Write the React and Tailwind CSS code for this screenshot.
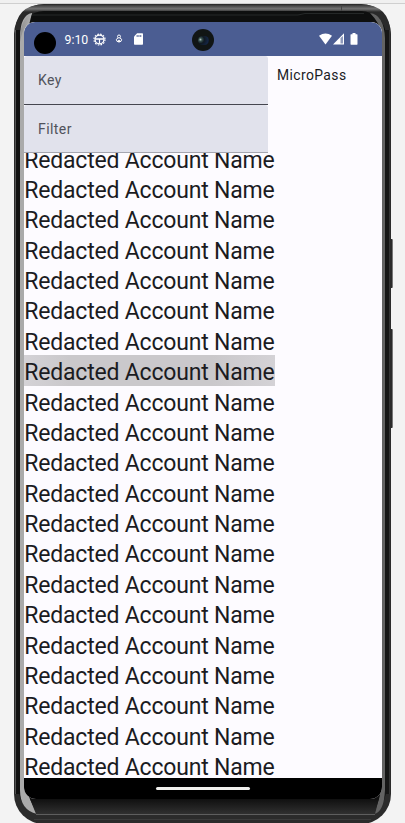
import React from "react";

const accounts = Array.from({ length: 21 }, () => "Redacted Account Name");
const selectedIndex = 7;

function Chassis() {
  return (
    <svg className="absolute inset-0" width="405" height="823" viewBox="0 0 405 823" aria-hidden="true">
      <defs>
        <linearGradient id="top" x1="0" y1="4" x2="0" y2="12" gradientUnits="userSpaceOnUse">
          <stop offset="0" stopColor="#252525" />
          <stop offset="0.25" stopColor="#4a4a4a" />
          <stop offset="0.6" stopColor="#747474" />
          <stop offset="1" stopColor="#2a2a2a" />
        </linearGradient>
        <linearGradient id="chin" x1="0" y1="799" x2="0" y2="814" gradientUnits="userSpaceOnUse">
          <stop offset="0" stopColor="#101010" />
          <stop offset="1" stopColor="#303030" />
        </linearGradient>
        <linearGradient id="glint" x1="0" y1="0" x2="1" y2="0">
          <stop offset="0" stopColor="#8e8e8e" />
          <stop offset="1" stopColor="#b4b4b4" />
        </linearGradient>
      </defs>
      <rect x="390" y="239" width="3" height="49" rx="1" fill="#777" />
      <rect x="390" y="239" width="2" height="49" fill="#2b2b2b" />
      <rect x="390" y="329" width="3" height="99" rx="1" fill="#777" />
      <rect x="390" y="329" width="2" height="99" fill="#2b2b2b" />
      <rect x="14" y="4" width="377" height="820" rx="30" fill="#2b2b2b" />
      <path d="M15 34Q15 4.500 44 4.500H361Q390 4.500 390.500 34L384 30Q380 12 360 11.500H46Q24 12 20 34Z" fill="url(#top)" />
      <rect x="19" y="11" width="367" height="804" rx="25" fill="#0e0f0f" />
      <rect x="15" y="30" width="1" height="764" fill="#555" />
      <rect x="16" y="30" width="4" height="764" fill="#111" />
      <rect x="385" y="30" width="4" height="764" fill="#161616" />
      <rect x="389" y="30" width="1" height="764" fill="#343434" />
      <path d="M20 38Q20 15 32 13L29 25L24 34V769L30 799L37 814Q20 810 20 790Z" fill="#aaa" />
      <path d="M27 25Q22 30 20 42V37Q21 19 32 13Z" fill="url(#glint)" />
      <path d="M382 34Q379 22 370 13Q384 15 385 38V790Q384 812 374 814L379 799L382 783Z" fill="#636363" />
      <path d="M28 794H380L375 814H36Z" fill="url(#chin)" />
      <path d="M36 814.500H375" stroke="#5e5e5e" />
      <path d="M34 819.500H371" stroke="#3b3b3b" />
      <path d="M32 15H298L305 13.500H364" fill="none" stroke="#252828" />
      <path d="M341.500 5V11" stroke="#444" />
    </svg>
  );
}

function StatusBar() {
  return (
    <header className="relative flex h-[34px] shrink-0 items-center rounded-t-[11px] bg-[#4b5d92] text-white">
      <span className="ml-[10px] mt-[8px] h-[22px] w-[22px] rounded-full bg-black" />
      <span className="ml-[8.500px] mt-[2px] w-[24px] text-[12.300px] leading-none">9:10</span>
      <svg className="ml-[4.500px]" width="13" height="13" viewBox="0 0 13 13" fill="none" stroke="white">
        <circle cx="6.500" cy="6.500" r="5.500" strokeWidth="1.200" strokeDasharray="1.600 1.280" />
        <circle cx="6.500" cy="6.500" r="4.400" strokeWidth="1.300" />
        <path d="M2.500 6H10.500" strokeWidth="1.700" />
        <path d="M6.500 6V10.500" strokeWidth="1.200" />
      </svg>
      <svg className="ml-[8.500px]" width="8" height="11" viewBox="0 0 8 11" fill="none" stroke="white">
        <circle cx="4" cy="2.500" r="1.500" />
        <path d="M3 4L1.300 5.300A2.700 2.700 0 1 0 6.700 5.300L5 4" />
        <circle cx="4" cy="7" r="0.800" fill="white" />
      </svg>
      <svg className="ml-[11px]" width="9" height="12" viewBox="0 0 10 12" preserveAspectRatio="none">
        <path d="M3.500 .3H9.200Q10 .3 10 1.100V10.900Q10 11.700 9.200 11.700H.8Q0 11.700 0 10.900V3.500Z" fill="white" />
        <path d="M3.500 2V4M5.500 2V4M7.500 2V4" stroke="#4b5d92" />
      </svg>
      <span className="absolute left-[168px] top-[7px] flex h-[22px] w-[22px] items-center justify-center rounded-full bg-[#111515]">
        <span className="h-[9px] w-[11px] rounded-full bg-[radial-gradient(circle_at_22%_40%,#b9c8c7_0,#38514f_16%,#101922_38%,#142544_75%,#0b1018_100%)]" />
      </span>
      <svg className="ml-auto mr-[24px]" width="39" height="12" viewBox="0 0 39 12">
        <path d="M0 2.700Q6.500 -1.700 13 2.700L6.500 11.500Z" fill="white" />
        <path d="M14 11.500L25 .3V11.500Z" fill="white" />
        <path d="M21.500 5V10.500H24V3Z" fill="#8f9abc" />
        <path d="M33.500 0H36.500V1.300H38Q38.500 1.300 38.500 2V11Q38.500 11.700 38 11.700H32Q31.500 11.700 31.500 11V2Q31.500 1.300 32 1.300H33.500Z" fill="white" />
      </svg>
    </header>
  );
}

function Field({ label, line }) {
  return (
    <div className={`flex h-[48.500px] items-center rounded-t-[3px] border-b bg-[#e1e2ec] pl-[14px] pt-[1.500px] text-[14px] tracking-[0.430px] text-[#50525b] ${line}`}>
      {label}
    </div>
  );
}

export default function App() {
  return (
    <main className="relative h-[823px] w-[405px] overflow-hidden border-t-[3px] border-[#f0f0f0] bg-[#f3f3f3] font-['Roboto',sans-serif]">
      <div className="h-px bg-[#cfcfcf]" />
      <div className="absolute -top-[3px] left-0">
        <div className="relative h-[823px] w-[405px]"><Chassis /></div>
      </div>
      <section className="relative ml-[24px] mt-[18px] flex h-[777px] w-[358px] flex-col overflow-hidden rounded-t-[11px] rounded-b-[12px] bg-[#fdfbff]">
        <StatusBar />
        <div className="flex h-[97px] shrink-0">
          <div className="w-[244px]">
            <Field label="Key" line="border-[#45464f]" />
            <Field label="Filter" line="border-[#a5a6b0]" />
          </div>
          <h1 className="ml-[9px] mt-[9px] text-[13.900px] leading-[20px] tracking-[0.400px] text-[#1b1b1f]">MicroPass</h1>
        </div>
        <div className="h-[625px] shrink-0 overflow-hidden">
          <ul className="-mt-[10.400px] w-[251px]">
            {accounts.map((name, i) => (
              <li
                key={i}
                className={`h-[30.380px] whitespace-nowrap pl-[0.300px] text-[23px] leading-[35.600px] tracking-[-0.200px] text-[#1b1b1f] ${
                  i === selectedIndex ? "bg-[linear-gradient(90deg,#d4d2d6_0%,#cac8cb_18%,#cac8cb_75%,#d4d2d6_100%)]" : ""
                }`}
              >
                {name}
              </li>
            ))}
          </ul>
        </div>
        <footer className="flex h-[21px] shrink-0 justify-center bg-black pt-[9px]">
          <span className="h-[3px] w-[94px] rounded-full bg-[#f0f0ee]" />
        </footer>
      </section>
    </main>
  );
}
